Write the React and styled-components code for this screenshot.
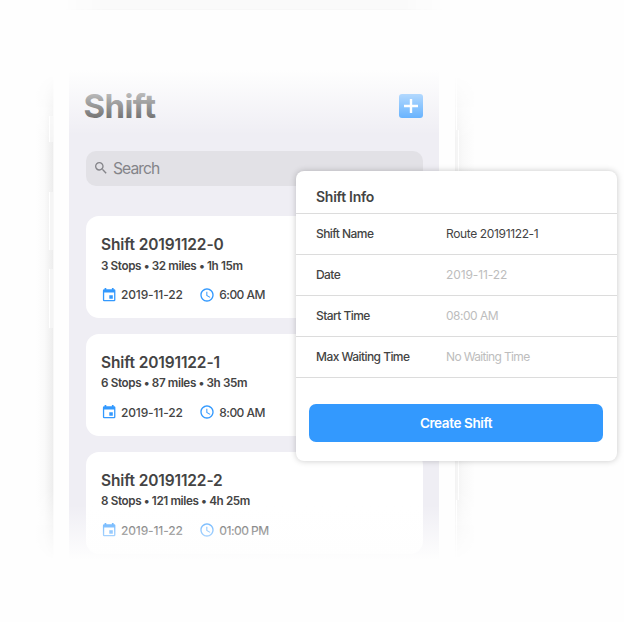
import React from "react";
import styled, { createGlobalStyle } from "styled-components";
import { MdAccessTime, MdSearch } from "react-icons/md";

const GlobalStyle = createGlobalStyle`
  * { box-sizing: border-box; }
  body {
    margin: 0;
    background: #fff;
    font-family: Inter, "Liberation Sans", sans-serif;
    color: #444;
    overflow: hidden;
  }
`;

const Page = styled.div`
  position: relative;
  width: 624px;
  height: 622px;
  overflow: hidden;
  background: #fefefe;
`;

const TopShade = styled.div`
  width: 380px;
  height: 10px;
  margin-left: 64px;
  border-bottom: 1px solid #f7f7f7;
  background: #fafafa;
  mask-image: linear-gradient(to right, transparent, #000 40px, #000 340px, transparent);
`;

const Device = styled.div`
  display: flex;
  height: 500px;
  margin: 60px 0 0 36px;
`;

const edgeMask = "linear-gradient(to bottom, transparent 5px, #000 70px, #000 420px, transparent 490px)";

const LeftEdge = styled.div`
  display: flex;
  flex-direction: column;
  align-items: flex-end;
  width: 18px;
  padding-top: 46px;
  border-right: 1px solid #f8f8f8;
  background: linear-gradient(to right, #fefefe, #fafafa 50%, #ededed);
  mask-image: ${edgeMask};
`;

const SideKey = styled.i`
  width: 4px;
  height: ${(p) => p.$height}px;
  margin-bottom: ${(p) => p.$after}px;
  border-left: 1px solid #fff;
  background: #f5f5f5;
`;

const RightEdge = styled.div`
  width: 20px;
  border-left: 1px solid #f3f3f3;
  background: linear-gradient(to right, #fff 1px, #f3f3f3 1px, #f9f9f9 7px, #fefefe);
  mask-image: ${edgeMask};
`;

const PowerKey = styled.i`
  display: block;
  width: 3px;
  height: 370px;
  margin-top: 60px;
  border-right: 1px solid #fff;
  background: #f5f5f5;
`;

const Bezel = styled.div`
  width: 401px;
  padding: 0 15px;
  background: #fefefe;
`;

const Screen = styled.main`
  position: relative;
  width: 370px;
  height: 100%;
  padding: 22px 16px 0 17px;
  background: #efeef4;
`;

const Fade = styled.div`
  position: absolute;
  left: 0;
  right: 0;
  ${(p) =>
    p.$side === "top"
      ? "top: 0; height: 65px; background: linear-gradient(to bottom, #fefefe, rgba(254,254,254,0));"
      : "bottom: 0; height: 65px; background: linear-gradient(to top, #fefefe 10px, rgba(254,254,254,0));"}
  pointer-events: none;
`;

const Header = styled.header`
  display: flex;
  justify-content: space-between;
  height: 58.5px;
`;

const Heading = styled.h1`
  margin: -6px 0 0 -2.5px;
  font-size: 33px;
  line-height: 40px;
  font-weight: 700;
  letter-spacing: -0.6px;
`;

const AddButton = styled.button`
  display: grid;
  place-items: center;
  width: 24px;
  height: 24px;
  margin-top: 2.2px;
  padding: 0;
  border: 0;
  border-radius: 3px;
  background: #3399fe;
`;

const SearchBar = styled.div`
  display: flex;
  align-items: center;
  gap: 4px;
  height: 35px;
  padding: 1px 0 0 7px;
  border-radius: 10px;
  background: #e2e1e6;
  color: #848489;
  font-size: 15.7px;
  letter-spacing: -0.95px;
  svg { position: relative; top: -1px; }
`;

const Cards = styled.div`
  display: flex;
  flex-direction: column;
  gap: 15.5px;
  margin-top: 30.5px;
`;

const Card = styled.article`
  height: 102.3px;
  padding: 19px 15px 0;
  border-radius: 13px;
  background: #fff;
`;

const CardTitle = styled.h2`
  margin: 0;
  font-size: 15.5px;
  line-height: 20px;
  font-weight: 600;
  letter-spacing: -0.13px;
`;

const Stats = styled.p`
  margin: 2.5px 0 0;
  font-size: 11.7px;
  line-height: 16px;
  font-weight: 600;
  letter-spacing: -0.38px;
  white-space: nowrap;
`;

const Meta = styled.div`
  display: flex;
  margin-top: 13px;
  height: 16px;
`;

const MetaItem = styled.div`
  display: flex;
  align-items: center;
  gap: 4px;
  width: 98.3px;
  font-size: 12px;
  font-weight: 500;
  letter-spacing: ${(p) => p.$track || 0}px;
  white-space: nowrap;
  svg { color: #3399fe; flex: none; }
`;

const Modal = styled.section`
  position: absolute;
  left: 295.5px;
  top: 170.5px;
  width: 321.5px;
  height: 290.5px;
  border-radius: 8px;
  background: #fff;
  box-shadow: 0 0 6px rgba(0, 0, 0, 0.22);
`;

const ModalTitle = styled.h2`
  height: 43px;
  margin: 0;
  padding: 16px 20.5px 0;
  border-bottom: 1px solid #dcdcdc;
  font-size: 14px;
  line-height: 20px;
  font-weight: 600;
  letter-spacing: -0.27px;
`;

const Field = styled.div`
  display: grid;
  grid-template-columns: 130px 1fr;
  align-items: center;
  height: 41px;
  padding: 0 0 0 20.5px;
  border-bottom: 1px solid #dcdcdc;
  font-size: 12px;
  line-height: 16px;
`;

const Label = styled.span`
  font-weight: 500;
  letter-spacing: -0.56px;
`;

const Value = styled.span`
  color: ${(p) => (p.$placeholder ? "#bdbdbd" : "#444")};
  letter-spacing: ${(p) => p.$track}px;
`;

const Submit = styled.button`
  display: block;
  width: 294px;
  height: 38px;
  margin: 26.5px 0 0 13.5px;
  padding: 0;
  border: 0;
  border-radius: 7px;
  background: #3399fe;
  color: #fff;
  font: 600 13.5px Inter, sans-serif;
  letter-spacing: -0.4px;
`;

const shifts = [
  { name: "Shift 20191122-0", stats: "3 Stops • 32 miles • 1h 15m", time: "6:00 AM" },
  { name: "Shift 20191122-1", stats: "6 Stops • 87 miles • 3h 35m", time: "8:00 AM" },
  { name: "Shift 20191122-2", stats: "8 Stops • 121 miles • 4h 25m", time: "01:00 PM" },
];

const fields = [
  { label: "Shift Name", value: "Route 20191122-1", track: -0.36 },
  { label: "Date", value: "2019-11-22", placeholder: true, track: -0.1 },
  { label: "Start Time", value: "08:00 AM", placeholder: true, track: -0.5 },
  { label: "Max Waiting Time", value: "No Waiting Time", placeholder: true, track: -0.65 },
];

const CalendarIcon = () => (
  <svg width="16" height="16" viewBox="0 0 16 16" fill="currentColor">
    <path
      fillRule="evenodd"
      d="M3.6.9h1.7v1.3h5.6V.9h1.7v1.3h.5a1.3 1.3 0 0 1 1.3 1.3v9.4a1.3 1.3 0 0 1-1.3 1.3H3.2a1.3 1.3 0 0 1-1.3-1.3V3.5a1.3 1.3 0 0 1 1.3-1.3h.4zM3.2 5.5v7.4h9.9V5.5zM8.3 8.2h3.5v3.5H8.3z"
    />
  </svg>
);

export default function App() {
  return (
    <Page>
      <GlobalStyle />
      <TopShade />
      <Device>
        <LeftEdge>
          <SideKey $height={26} $after={50} />
          <SideKey $height={58} $after={19} />
          <SideKey $height={59} $after={0} />
        </LeftEdge>
        <Bezel>
          <Screen>
            <Header>
              <Heading>Shift</Heading>
              <AddButton aria-label="Add shift">
                <svg width="14" height="14" viewBox="0 0 14 14" stroke="#fff" strokeWidth="2.4">
                  <path d="M7 0v14M0 7h14" />
                </svg>
              </AddButton>
            </Header>
            <SearchBar>
              <MdSearch size={16} />
              Search
            </SearchBar>
            <Cards>
              {shifts.map((s) => (
                <Card key={s.name}>
                  <CardTitle>{s.name}</CardTitle>
                  <Stats>{s.stats}</Stats>
                  <Meta>
                    <MetaItem $track={-0.15}><CalendarIcon />2019-11-22</MetaItem>
                    <MetaItem $track={-0.55}><MdAccessTime size={16} />{s.time}</MetaItem>
                  </Meta>
                </Card>
              ))}
            </Cards>
            <Fade $side="top" />
            <Fade $side="bottom" />
          </Screen>
        </Bezel>
        <RightEdge>
          <PowerKey />
        </RightEdge>
      </Device>
      <Modal>
        <ModalTitle>Shift Info</ModalTitle>
        {fields.map((f) => (
          <Field key={f.label}>
            <Label>{f.label}</Label>
            <Value $placeholder={f.placeholder} $track={f.track}>{f.value}</Value>
          </Field>
        ))}
        <Submit>Create Shift</Submit>
      </Modal>
    </Page>
  );
}
